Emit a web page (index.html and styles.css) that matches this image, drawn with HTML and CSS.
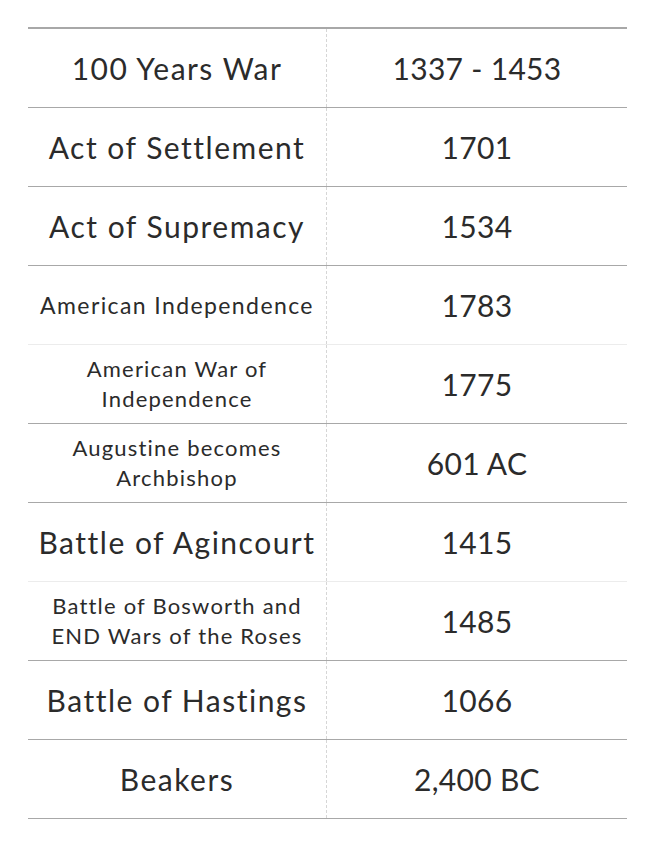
FILE: index.html
```html
<!DOCTYPE html>
<html>
<head>
<meta charset="utf-8">
<link rel="stylesheet" href="styles.css">
</head>
<body>
<table class="events">
  <tr class="row"><td class="name xl">100 Years War</td><td class="date">1337 - 1453</td></tr>
  <tr class="row"><td class="name xl">Act of Settlement</td><td class="date">1701</td></tr>
  <tr class="row"><td class="name xl">Act of Supremacy</td><td class="date">1534</td></tr>
  <tr class="row light"><td class="name md">American Independence</td><td class="date">1783</td></tr>
  <tr class="row"><td class="name sm">American War of<br>Independence</td><td class="date">1775</td></tr>
  <tr class="row"><td class="name sm">Augustine becomes<br>Archbishop</td><td class="date">601 AC</td></tr>
  <tr class="row light"><td class="name xl">Battle of Agincourt</td><td class="date">1415</td></tr>
  <tr class="row"><td class="name sm">Battle of Bosworth and<br>END Wars of the Roses</td><td class="date">1485</td></tr>
  <tr class="row"><td class="name xl">Battle of Hastings</td><td class="date">1066</td></tr>
  <tr class="row"><td class="name xl">Beakers</td><td class="date">2,400 BC</td></tr>
</table>
</body>
</html>
```
FILE: styles.css
```css
html, body {
  margin: 0;
  padding: 0;
  background: #ffffff;
}
body {
  padding: 27px 28px 0 28px;
  font-family: Lato, "Noto Sans", sans-serif;
  font-weight: 400;
  color: #2b2b2b;
}
.events {
  width: 599px;
  border-collapse: collapse;
  border-top: 2px solid #a8a8a8;
}
.row td {
  height: 78px;
  padding: 0;
  text-align: center;
  vertical-align: middle;
  border-bottom: 1px solid #a8a8a8;
}
.row.light td {
  border-bottom-color: #ececec;
}
.name {
  width: 298px;
  border-right: 1px dashed #d6d6d6;
}
.xl { font-size: 30px; letter-spacing: 1.5px; }
.md { font-size: 23px; letter-spacing: 1.4px; }
.sm { font-size: 22px; line-height: 30px; letter-spacing: 1.2px; }
.date {
  font-size: 30px;
  letter-spacing: 0.3px;
}
```
